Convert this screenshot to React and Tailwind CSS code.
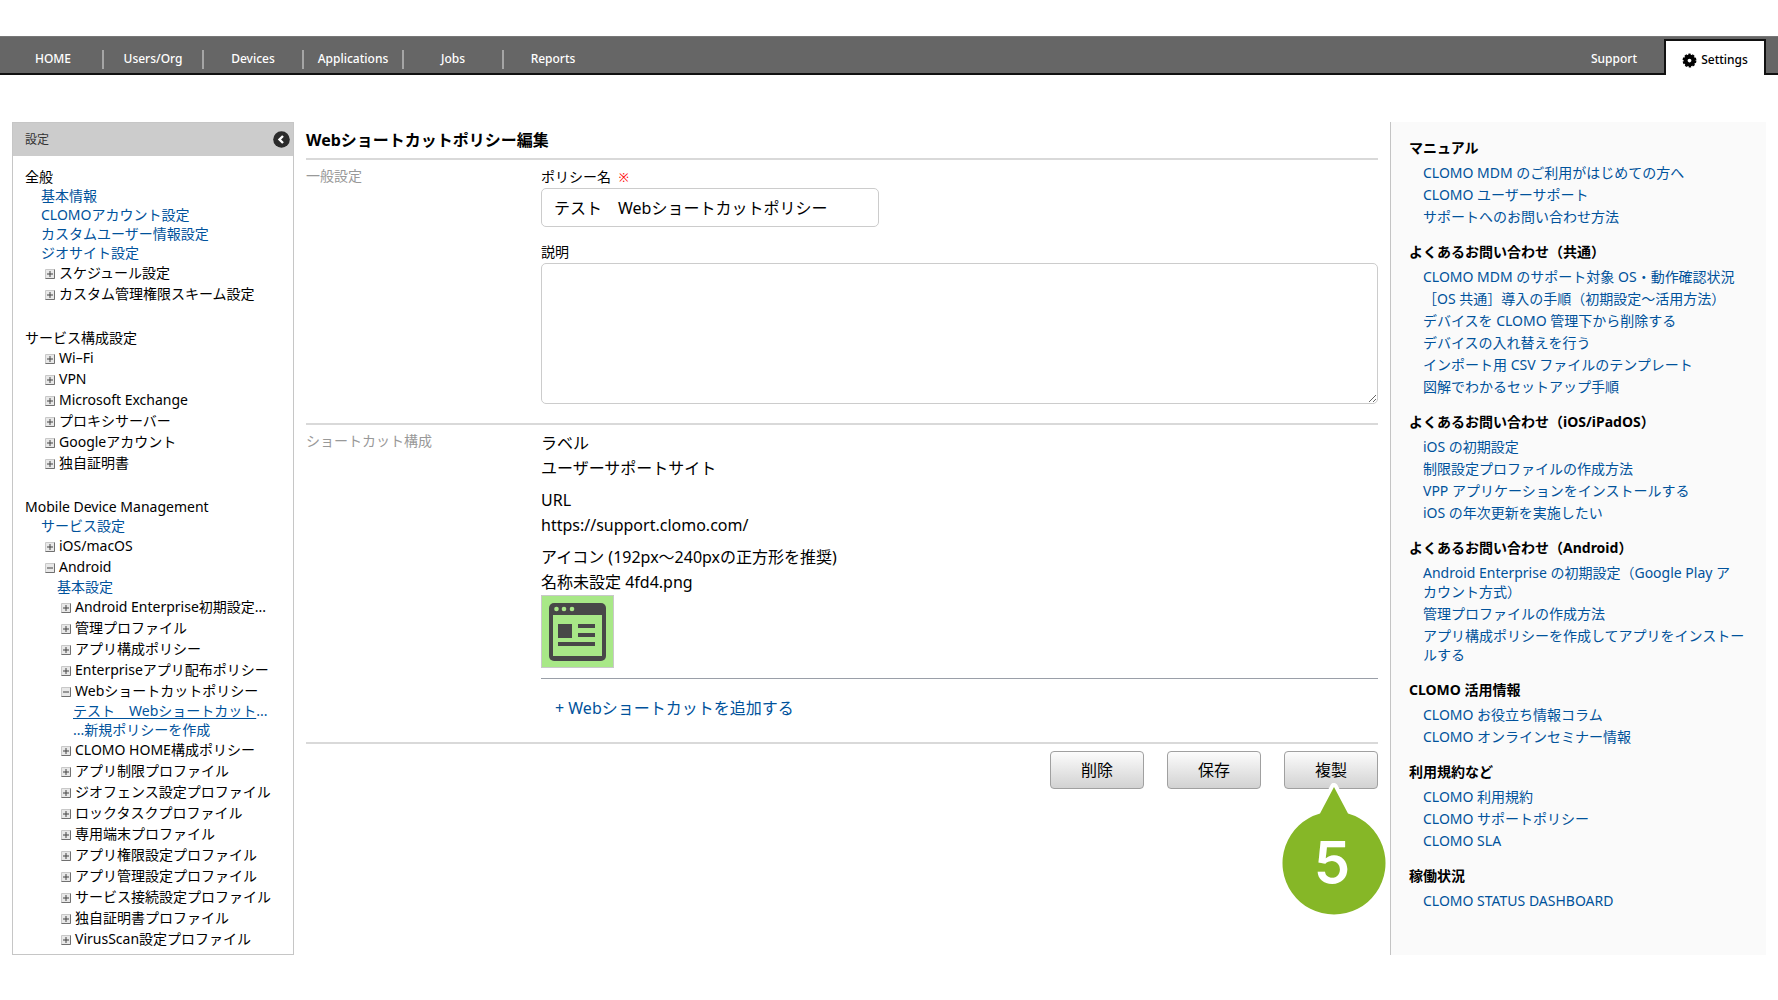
import React from 'react';

const tree = [
  {
    title: '全般',
    items: [
      { link: true, label: '基本情報' },
      { link: true, label: 'CLOMOアカウント設定' },
      { link: true, label: 'カスタムユーザー情報設定' },
      { link: true, label: 'ジオサイト設定' },
      { label: 'スケジュール設定' },
      { label: 'カスタム管理権限スキーム設定' },
    ],
  },
  {
    title: 'サービス構成設定',
    items: [
      { label: 'Wi–Fi' },
      { label: 'VPN' },
      { label: 'Microsoft Exchange' },
      { label: 'プロキシサーバー' },
      { label: 'Googleアカウント' },
      { label: '独自証明書' },
    ],
  },
  {
    title: 'Mobile Device Management',
    items: [
      { link: true, label: 'サービス設定' },
      { label: 'iOS/macOS' },
      {
        label: 'Android',
        items: [
          { link: true, label: '基本設定' },
          { label: 'Android Enterprise初期設定...' },
          { label: '管理プロファイル' },
          { label: 'アプリ構成ポリシー' },
          { label: 'Enterpriseアプリ配布ポリシー' },
          {
            label: 'Webショートカットポリシー',
            items: [
              { link: true, current: true, label: 'テスト　Webショートカット', tail: '...' },
              { link: true, label: '...新規ポリシーを作成' },
            ],
          },
          { label: 'CLOMO HOME構成ポリシー' },
          { label: 'アプリ制限プロファイル' },
          { label: 'ジオフェンス設定プロファイル' },
          { label: 'ロックタスクプロファイル' },
          { label: '専用端末プロファイル' },
          { label: 'アプリ権限設定プロファイル' },
          { label: 'アプリ管理設定プロファイル' },
          { label: 'サービス接続設定プロファイル' },
          { label: '独自証明書プロファイル' },
          { label: 'VirusScan設定プロファイル' },
        ],
      },
    ],
  },
];

const manuals = [
  {
    title: 'マニュアル',
    links: ['CLOMO MDM のご利用がはじめての方へ', 'CLOMO ユーザーサポート', 'サポートへのお問い合わせ方法'],
  },
  {
    title: 'よくあるお問い合わせ（共通）',
    links: [
      'CLOMO MDM のサポート対象 OS・動作確認状況',
      '［OS 共通］導入の手順（初期設定〜活用方法）',
      'デバイスを CLOMO 管理下から削除する',
      'デバイスの入れ替えを行う',
      'インポート用 CSV ファイルのテンプレート',
      '図解でわかるセットアップ手順',
    ],
  },
  {
    title: 'よくあるお問い合わせ（iOS/iPadOS）',
    links: [
      'iOS の初期設定',
      '制限設定プロファイルの作成方法',
      'VPP アプリケーションをインストールする',
      'iOS の年次更新を実施したい',
    ],
  },
  {
    title: 'よくあるお問い合わせ（Android）',
    links: [
      'Android Enterprise の初期設定（Google Play ア\nカウント方式）',
      '管理プロファイルの作成方法',
      'アプリ構成ポリシーを作成してアプリをインストールする',
    ],
  },
  { title: 'CLOMO 活用情報', links: ['CLOMO お役立ち情報コラム', 'CLOMO オンラインセミナー情報'] },
  { title: '利用規約など', links: ['CLOMO 利用規約', 'CLOMO サポートポリシー', 'CLOMO SLA'] },
  { title: '稼働状況', links: ['CLOMO STATUS DASHBOARD'] },
];

const ToggleIcon = ({ open }) => (
  <svg viewBox="0 0 10 10" className="mt-[2px] h-[10px] w-[10px] shrink-0" aria-hidden="true">
    <rect x="0" y="0" width="10" height="10" rx="1" fill="#c8c8c8" />
    <path d="M9.5 0.5V9.5H0.5" fill="none" stroke="#707070" />
    <rect x="1" y="1" width="8" height="8" fill="#e8e8e8" />
    <path d={open ? 'M2 5H8' : 'M2 5H8M5 2V8'} stroke="#444" strokeWidth="1" />
  </svg>
);

const TreeItems = ({ items }) => (
  <ul className="pl-4">
    {items.map((item) => (
      <li key={item.label}>
        {item.link ? (
          <a href="#" className="block leading-[19px] whitespace-nowrap text-[#00529b]">
            <span className={item.current ? 'underline underline-offset-2' : ''}>{item.label}</span>
            {item.tail}
          </a>
        ) : (
          <button
            type="button"
            aria-expanded={Boolean(item.items)}
            className="flex items-center gap-1 pl-1 leading-[21px] whitespace-nowrap"
          >
            <ToggleIcon open={Boolean(item.items)} />
            {item.label}
          </button>
        )}
        {item.items && <TreeItems items={item.items} />}
      </li>
    ))}
  </ul>
);

const NavBar = () => (
  <nav className="flex h-[39px] items-stretch border-t border-t-[#777] border-b-2 border-b-[#111] bg-[#666] pl-[2px] text-xs font-medium text-white">
    {['HOME', 'Users/Org', 'Devices', 'Applications', 'Jobs', 'Reports'].map((name, i) => (
      <div key={name} className="flex w-[100px] items-center">
        <span className={i === 0 ? 'h-[19px] w-[2px]' : 'mt-2 h-[19px] w-[2px] bg-[#a5a5a5]'} />
        <a href="#" className="flex-1 pt-2 text-center">{name}</a>
      </div>
    ))}
    <a href="#" className="ml-auto w-[100px] self-center pt-2 text-center">Support</a>
    <a
      href="#"
      className="mt-[2px] mr-3 -mb-[2px] flex w-[102px] items-center justify-center gap-1 border-2 border-b-0 border-[#111] bg-white pt-1 text-black"
    >
      <svg viewBox="-8 -8 16 16" className="h-[15px] w-[15px]" aria-hidden="true">
        <circle r="4.2" fill="none" stroke="#000" strokeWidth="4.4" />
        <circle r="6.6" fill="none" stroke="#000" strokeWidth="1.6" strokeDasharray="2.6 1.547" />
      </svg>
      Settings
    </a>
  </nav>
);

const SideMenu = () => (
  <aside className="w-[282px] shrink-0 border border-[#c6c6c6] text-sm">
    <div className="flex h-[33px] items-center justify-between bg-[#ccc] pr-[3px] pl-3 text-xs text-[#333]">
      設定
      <button type="button" aria-label="閉じる">
        <svg viewBox="0 0 17 17" className="h-[17px] w-[17px]">
          <circle cx="8.5" cy="8.5" r="8.3" fill="#2b2b2b" />
          <path d="M10 5L6.5 8.5L10 12" fill="none" stroke="#fff" strokeWidth="2.4" />
        </svg>
      </button>
    </div>
    <div className="flex flex-col gap-6 pt-[11px] pb-[5px] pl-3">
      {tree.map((group) => (
        <section key={group.title}>
          <h2 className="leading-[19px]">{group.title}</h2>
          <TreeItems items={group.items} />
        </section>
      ))}
    </div>
  </aside>
);

const ShortcutIcon = () => (
  <svg viewBox="0 0 73 73" className="block h-[73px] w-[73px]" aria-hidden="true">
    <rect x="0.5" y="0.5" width="72" height="72" fill="#a8e887" stroke="#c9c9c9" />
    <rect x="8" y="8" width="57" height="58" rx="5" fill="#484848" />
    <rect x="12" y="20" width="49" height="41" fill="#a8e887" />
    <circle cx="15.5" cy="14" r="2.3" fill="#a8e887" />
    <circle cx="23" cy="14" r="2.3" fill="#a8e887" />
    <circle cx="31" cy="14" r="2.3" fill="#a8e887" />
    <path d="M17 29h14v14h-14zM37 29h17v4h-17zM37 38h17v4h-17zM17 47h37v4h-37z" fill="#484848" />
  </svg>
);

const buttonClass =
  'h-[38px] w-[94px] rounded-[4px] border border-[#a0a0a0] bg-linear-to-b from-[#fcfcfc] to-[#d2d2d2] text-base';

const PolicyForm = () => (
  <main className="min-w-0 flex-1">
    <h1 className="flex h-9 items-center text-base font-bold">Webショートカットポリシー編集</h1>
    <form>
      <section className="flex border-t-2 border-[#d9d9d9] pt-[6px] pb-[19px] text-sm">
        <h2 className="w-[235px] shrink-0 leading-[19px] text-[#999]">一般設定</h2>
        <div className="flex-1">
          <label htmlFor="policy-name" className="block leading-[22px]">
            ポリシー名 <span className="ml-1 text-xs text-[#f00]">※</span>
          </label>
          <input
            id="policy-name"
            type="text"
            defaultValue="テスト　Webショートカットポリシー"
            className="block h-[39px] w-[338px] rounded-[5px] border border-[#ccc] px-3 pb-[2px] text-base"
          />
          <label htmlFor="description" className="mt-3.5 block leading-[22px]">説明</label>
          <textarea id="description" className="block h-[141px] w-full rounded-[5px] border border-[#ccc]" />
        </div>
      </section>
      <section className="flex border-t-2 border-[#d9d9d9] pt-[6px] pb-[22px]">
        <h2 className="w-[235px] shrink-0 text-sm leading-[19px] text-[#999]">ショートカット構成</h2>
        <div className="flex-1">
          <dl className="flex flex-col gap-[7px] border-b border-[#9a9fa8] pb-[10px] text-base leading-[25px]">
            <div>
              <dt>ラベル</dt>
              <dd>ユーザーサポートサイト</dd>
            </div>
            <div>
              <dt>URL</dt>
              <dd>https://support.clomo.com/</dd>
            </div>
            <div>
              <dt>アイコン (192px〜240pxの正方形を推奨)</dt>
              <dd>
                名称未設定 4fd4.png
                <ShortcutIcon />
              </dd>
            </div>
          </dl>
          <button type="button" className="mt-[17px] ml-3.5 block text-base text-[#00529b]">
            + Webショートカットを追加する
          </button>
        </div>
      </section>
      <div className="flex justify-end gap-[23px] border-t-2 border-[#d9d9d9] pt-[7px]">
        <button type="button" className={buttonClass}>削除</button>
        <button type="button" className={buttonClass}>保存</button>
        <div className="relative">
          <button type="button" className={buttonClass}>複製</button>
          {/* step marker pointing at the button */}
          <div className="absolute top-8 -left-2 h-[136px] w-[112px]">
            <svg viewBox="0 0 112 136" className="absolute inset-0 h-full w-full" aria-hidden="true">
              <path d="M44 30.5L58 4L72 30.5" fill="none" stroke="#fff" strokeWidth="8" strokeLinejoin="round" />
              <path d="M58 4L72 30.5A51.5 51.5 0 1 1 44 30.5Z" fill="#86b727" />
            </svg>
            <span className="absolute inset-x-0 top-[49px] text-center font-[Inter] text-[58px] leading-[60px] font-semibold text-white">
              5
            </span>
          </div>
        </div>
      </div>
    </form>
  </main>
);

const HelpLinks = () => (
  <aside className="flex w-[376px] shrink-0 flex-col gap-4 border-l border-[#c4c4c4] bg-[#fafafa] pt-4 pr-4 pl-[18px] text-sm leading-[19px]">
    {manuals.map((group) => (
      <section key={group.title}>
        <h2 className="font-bold">{group.title}</h2>
        <ul className="mt-1.5 flex flex-col gap-[3px] pl-3.5">
          {group.links.map((link) => (
            <li key={link}>
              <a href="#" className="block whitespace-pre-line text-[#00529b]">{link}</a>
            </li>
          ))}
        </ul>
      </section>
    ))}
  </aside>
);

const App = () => {
  return (
    <div
      lang="ja"
      className="min-h-screen bg-white pt-9 font-['Noto_Sans','Noto_Sans_CJK_JP',sans-serif] text-black"
    >
      <NavBar />
      <div className="flex gap-3 px-3 pt-[47px]">
        <SideMenu />
        <PolicyForm />
        <HelpLinks />
      </div>
    </div>
  );
};

export default App;
